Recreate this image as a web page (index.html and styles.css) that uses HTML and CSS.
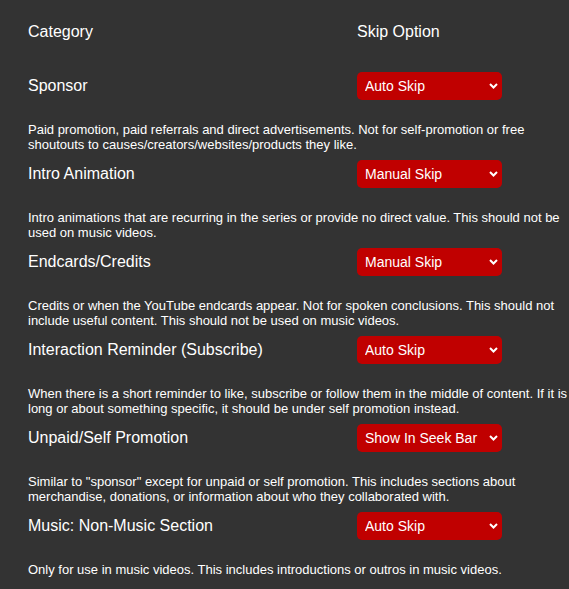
FILE: index.html
```html
<!DOCTYPE html>
<html lang="en">
<head>
<meta charset="utf-8">
<title>Skip Options</title>
<link rel="stylesheet" href="styles.css">
</head>
<body>
<div class="page">
  <div class="header">
    <div class="col-name">Category</div>
    <div class="col-opt">Skip Option</div>
  </div>

  <div class="cat">
    <div class="row">
      <div class="col-name">Sponsor</div>
      <div class="col-opt"><div class="sel"><select><option>Auto Skip</option><option>Manual Skip</option><option>Show In Seek Bar</option></select><svg class="chev" width="9" height="6" viewBox="0 0 9 6"><path d="M1 1l3.5 3.5L8 1" fill="none" stroke="#fff" stroke-width="2"/></svg></div></div>
    </div>
    <p class="desc">Paid promotion, paid referrals and direct advertisements. Not for self-promotion or free shoutouts to causes/creators/websites/products they like.</p>
  </div>

  <div class="cat">
    <div class="row">
      <div class="col-name">Intro Animation</div>
      <div class="col-opt"><div class="sel"><select><option>Manual Skip</option><option>Auto Skip</option><option>Show In Seek Bar</option></select><svg class="chev" width="9" height="6" viewBox="0 0 9 6"><path d="M1 1l3.5 3.5L8 1" fill="none" stroke="#fff" stroke-width="2"/></svg></div></div>
    </div>
    <p class="desc">Intro animations that are recurring in the series or provide no direct value. This should not be used on music videos.</p>
  </div>

  <div class="cat">
    <div class="row">
      <div class="col-name">Endcards/Credits</div>
      <div class="col-opt"><div class="sel"><select><option>Manual Skip</option><option>Auto Skip</option><option>Show In Seek Bar</option></select><svg class="chev" width="9" height="6" viewBox="0 0 9 6"><path d="M1 1l3.5 3.5L8 1" fill="none" stroke="#fff" stroke-width="2"/></svg></div></div>
    </div>
    <p class="desc">Credits or when the YouTube endcards appear. Not for spoken conclusions. This should not include useful content. This should not be used on music videos.</p>
  </div>

  <div class="cat">
    <div class="row">
      <div class="col-name">Interaction Reminder (Subscribe)</div>
      <div class="col-opt"><div class="sel"><select><option>Auto Skip</option><option>Manual Skip</option><option>Show In Seek Bar</option></select><svg class="chev" width="9" height="6" viewBox="0 0 9 6"><path d="M1 1l3.5 3.5L8 1" fill="none" stroke="#fff" stroke-width="2"/></svg></div></div>
    </div>
    <p class="desc">When there is a short reminder to like, subscribe or follow them in the middle of content. If it is long or about something specific, it should be under self promotion instead.</p>
  </div>

  <div class="cat">
    <div class="row">
      <div class="col-name">Unpaid/Self Promotion</div>
      <div class="col-opt"><div class="sel"><select><option>Show In Seek Bar</option><option>Auto Skip</option><option>Manual Skip</option></select><svg class="chev" width="9" height="6" viewBox="0 0 9 6"><path d="M1 1l3.5 3.5L8 1" fill="none" stroke="#fff" stroke-width="2"/></svg></div></div>
    </div>
    <p class="desc">Similar to "sponsor" except for unpaid or self promotion. This includes sections about merchandise, donations, or information about who they collaborated with.</p>
  </div>

  <div class="cat">
    <div class="row">
      <div class="col-name">Music: Non-Music Section</div>
      <div class="col-opt"><div class="sel"><select><option>Auto Skip</option><option>Manual Skip</option><option>Show In Seek Bar</option></select><svg class="chev" width="9" height="6" viewBox="0 0 9 6"><path d="M1 1l3.5 3.5L8 1" fill="none" stroke="#fff" stroke-width="2"/></svg></div></div>
    </div>
    <p class="desc">Only for use in music videos. This includes introductions or outros in music videos.</p>
  </div>
</div>
</body>
</html>
```

FILE: styles.css
```css
html, body {
  margin: 0;
  padding: 0;
  background: #333333;
  overflow: hidden;
}
body {
  font-family: "Liberation Sans", Arial, sans-serif;
  color: #ffffff;
}
.page {
  padding: 22px 0 0 28px;
  width: 560px;
}
.header {
  display: flex;
  align-items: center;
  height: 20px;
  font-size: 16px;
  margin-bottom: 30px;
}
.col-name {
  width: 329px;
  flex: none;
}
.col-opt {
  flex: none;
}
.cat + .cat {
  margin-top: 8px;
}
.row {
  display: flex;
  align-items: center;
  height: 28px;
  font-size: 16px;
}
.sel {
  position: relative;
  width: 145px;
  height: 28px;
}
.sel select {
  -webkit-appearance: none;
  appearance: none;
  width: 145px;
  height: 28px;
  margin: 0;
  border: none;
  border-radius: 5px;
  background: #c00000;
  color: #ffffff;
  font-family: "Liberation Sans", Arial, sans-serif;
  font-size: 14px;
  padding: 0 20px 0 8px;
  outline: none;
}
.chev {
  position: absolute;
  right: 4px;
  top: 11px;
  pointer-events: none;
}
.desc {
  margin: 22px 0 0 0;
  font-size: 13px;
  line-height: 15px;
  width: 540px;
}
```
